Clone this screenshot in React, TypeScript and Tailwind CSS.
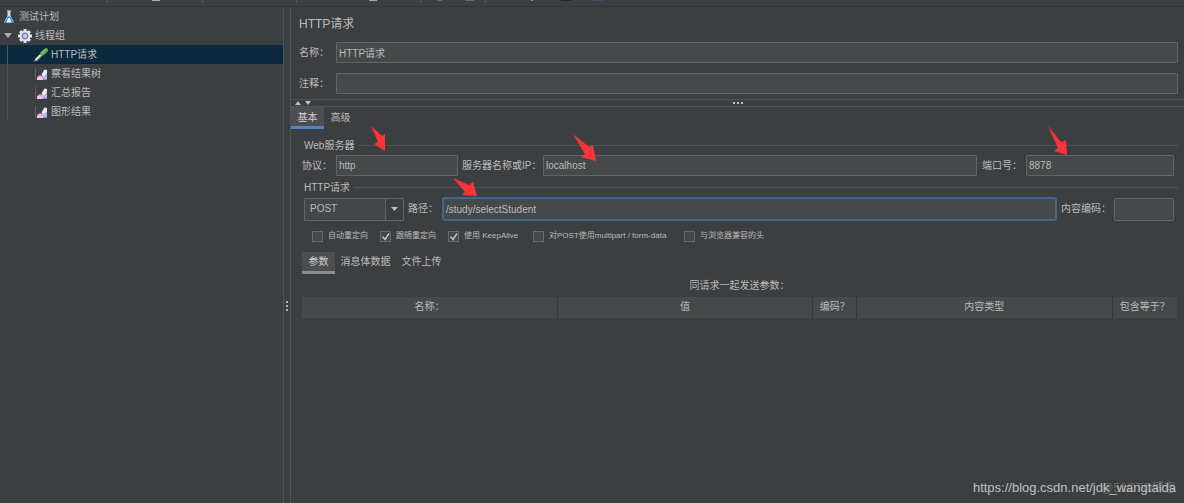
import type { ReactNode } from "react";
import { clsx } from "clsx";

interface TreeItem {
  label: string;
  icon: ReactNode;
  selected?: boolean;
}

function FlaskIcon() {
  return (
    <svg width="12" height="14" viewBox="0 0 12 14">
      <path d="M4.5 1h3v4.500L11 12.500H1L4.500 5.500z" fill="#c4dcee" />
      <path d="M4.6 6.500h2.800L10.600 13H1.400z" fill="#2f86d6" />
      <path d="M5 8h2l1.500 4.500h-5z" fill="#eaf5fd" />
      <path d="M4 .8h4" stroke="#9fc3dd" />
    </svg>
  );
}

function GearIcon() {
  return (
    <svg width="14" height="14" viewBox="0 0 14 14">
      <g stroke="#dfe4ea" strokeWidth="3">
        <path d="M7 0v14M0 7h14M2.1 2.1l9.8 9.8M11.9 2.1l-9.8 9.8" />
      </g>
      <circle cx="7" cy="7" r="5.400" fill="#e4e8ee" />
      <circle cx="7" cy="7" r="3.400" fill="#7587a6" />
      <circle cx="7" cy="7" r="2" fill="#c3d2e6" />
    </svg>
  );
}

function PipetteIcon() {
  return (
    <svg width="14" height="14" viewBox="0 0 14 14">
      <path d="M.5 13.500L3 10" stroke="#b9bcbe" strokeWidth="1.200" />
      <path d="M2 12L8 6" stroke="#e2e4e4" strokeWidth="2.600" />
      <path d="M3 12L9 6" stroke="#8d9296" strokeWidth="1" />
      <path d="M8 5.800l4-3.600" stroke="#5fae4c" strokeWidth="4" strokeLinecap="round" />
      <path d="M8 4.500l3.500-3" stroke="#9bd986" strokeWidth="1" />
    </svg>
  );
}

function ChartIcon() {
  return (
    <svg width="13" height="12" viewBox="0 0 13 12">
      <path d="M.5 0v12" stroke="#5d6164" />
      <path d="M2 9l3-2 2 1 4.500-6.500v10H2z" fill="#d99fd8" />
      <path d="M6.500 6.500L9.500 1.500l2.500.5v3.500L8.500 9z" fill="#eeeaf8" />
      <path d="M8.500 9L12 5v6.500H9z" fill="#b3b9ea" />
      <path d="M2 10l3-1.800 3 2V12H2z" fill="#f3c4ea" />
    </svg>
  );
}

// pointer arrows drawn over the form
function Arrow({ className, points }: { className: string; points: string }) {
  return (
    <svg className={clsx("pointer-events-none absolute", className)} width="26" height="30" viewBox="0 0 26 30">
      <polygon points={points} fill="#fb3336" />
    </svg>
  );
}

function TextField({ label, value, labelClass, className }: { label: string; value: string; labelClass: string; className: string }) {
  return (
    <>
      <label htmlFor={label} className={clsx("shrink-0 whitespace-nowrap", labelClass)}>{label}</label>
      <input id={label} defaultValue={value} className={clsx("min-w-0 bg-[#45494a] outline-none", className)} />
    </>
  );
}

function GroupTitle({ children }: { children: string }) {
  return (
    <div className="flex h-4 items-center gap-1 pl-[13px] pr-[6px]">
      <span className="pt-px">{children}</span>
      <span className="h-px flex-1 bg-[#505355]" />
    </div>
  );
}

function Option({ label, checked = false }: { label: string; checked?: boolean }) {
  return (
    <label className="flex items-center gap-[5px] whitespace-nowrap text-[8px]">
      <span className="grid">
        <input
          type="checkbox"
          defaultChecked={checked}
          className="peer col-start-1 row-start-1 size-[11px] appearance-none border border-[#666a6c] bg-[#43484a]"
        />
        <svg className="pointer-events-none invisible col-start-1 row-start-1 peer-checked:visible" width="11" height="11" viewBox="0 0 11 11">
          <path d="M2.500 5.500l2.500 3 4-6" fill="none" stroke="#c4c6c7" strokeWidth="1.400" />
        </svg>
      </span>
      {label}
    </label>
  );
}

const samplers: TreeItem[] = [
  { label: "HTTP请求", icon: <PipetteIcon />, selected: true },
  { label: "察看结果树", icon: <ChartIcon /> },
  { label: "汇总报告", icon: <ChartIcon /> },
  { label: "图形结果", icon: <ChartIcon /> },
];

const columns = [
  { label: "名称：", width: "" },
  { label: "值", width: "" },
  { label: "编码？", width: "w-[44px]" },
  { label: "内容类型", width: "" },
  { label: "包含等于？", width: "w-[65px]" },
];

const field = "h-[21px] rounded-[1px] border border-[#616567] px-[2px]";

function Sidebar() {
  return (
    <aside className="w-[284px] shrink-0 border-r border-[#505355]">
      <div className="flex h-[19px] items-center gap-1 pl-[3px] pt-px">
        <FlaskIcon />
        测试计划
      </div>
      <div className="flex h-[19px] items-center gap-[3px] pl-1">
        <svg width="8" height="5" viewBox="0 0 8 5" className="mr-[3px]">
          <path d="M0 0h8L4 5z" fill="#aeb0b1" />
        </svg>
        <GearIcon />
        线程组
      </div>
      <ul>
        {samplers.map((item) => (
          <li key={item.label} className={clsx("flex h-[19px] pl-[7px]", item.selected && "bg-[#0d293e]")}>
            <div className="flex items-center gap-[3px] border-l border-[#505355] pl-[26px]">
              <span className="flex w-[14px] justify-end">{item.icon}</span>
              {item.label}
            </div>
          </li>
        ))}
      </ul>
    </aside>
  );
}

function ParameterTable() {
  return (
    <table className="w-full table-fixed border-collapse">
      <caption className="h-[22px] pt-[3px] text-center leading-4">同请求一起发送参数：</caption>
      <thead>
        <tr className="h-[20px] border-b border-[#4b4f51] bg-[#45494b]">
          {columns.map((col) => (
            <th key={col.label} className={clsx("whitespace-nowrap border-r border-[#35383a] p-0 text-center font-normal last:border-r-0", col.width)}>
              {col.label}
            </th>
          ))}
        </tr>
      </thead>
    </table>
  );
}

export default function App() {
  return (
    <div className="relative flex min-h-screen flex-col bg-[#3c3f41] font-['Liberation_Sans','Noto_Sans_CJK_SC',sans-serif] text-[10px] leading-4 text-[#bbbbbb]">
      <header className="flex h-[7px] shrink-0 items-start border-b border-[#323537] pl-[107px]">
        <span className="h-[3px] w-px bg-[#55595b]" />
        <span className="ml-[44px] h-px w-[8px] bg-[#a9acae]" />
        <span className="ml-[42px] h-[3px] w-px bg-[#55595b]" />
        <span className="ml-[93px] h-[3px] w-px bg-[#55595b]" />
        <span className="ml-[72px] h-px w-[8px] bg-[#a9acae]" />
        <span className="ml-[43px] h-[3px] w-px bg-[#55595b]" />
        <span className="ml-[16px] h-px w-[5px] bg-[#66696b]" />
        <span className="ml-[23px] h-px w-[9px] bg-[#66696b]" />
        <span className="ml-[11px] h-[3px] w-px bg-[#55595b]" />
        <span className="ml-[45px] h-px w-[2px] bg-[#8a8d8f]" />
        <span className="ml-[28px] h-px w-[10px] bg-[#232628]" />
        <span className="ml-[22px] h-px w-[9px] bg-[#484e70]" />
      </header>

      <div className="flex flex-1">
        <Sidebar />
        {/* splitter handle */}
        <div className="flex w-[7px] shrink-0 flex-col items-center justify-center gap-[2px] border-r border-[#505355] pt-[101px]">
          <i className="size-[2px] bg-[#b8babb]" />
          <i className="size-[2px] bg-[#b8babb]" />
          <i className="size-[2px] bg-[#b8babb]" />
        </div>

        <main className="min-w-0 flex-1">
          <h1 className="pl-2 pt-2 text-[12px] leading-[18px]">HTTP请求</h1>
          <div className="flex items-center pl-2 pr-[6px] pt-[9px]">
            <TextField label="名称：" value="HTTP请求" labelClass="w-[37px]" className={clsx(field, "flex-1")} />
          </div>
          <div className="flex items-center pl-2 pr-[6px] pt-[10px]">
            <TextField label="注释：" value="" labelClass="w-[37px]" className={clsx(field, "flex-1")} />
          </div>

          <div className="mt-[5px] flex h-[8px] items-center border-y border-[#505355] pl-1 pr-5">
            <svg width="16" height="4" viewBox="0 0 16 4" fill="#c0c2c3">
              <path d="M0 4h6L3 0zM10 0h6l-3 4z" />
            </svg>
            <div className="flex flex-1 justify-center gap-[2px]">
              <i className="size-[2px] bg-[#c0c2c3]" />
              <i className="size-[2px] bg-[#c0c2c3]" />
              <i className="size-[2px] bg-[#c0c2c3]" />
            </div>
          </div>

          <nav className="flex h-[23px] border-b border-[#383b3d]">
            <button className="w-[33px] border-b-[3px] border-[#4a88c7] bg-[#4b4f51] pt-[3px] text-[#d0d0d0]">基本</button>
            <button className="w-[33px]">高级</button>
          </nav>

          <section className="pt-[7px]">
            <GroupTitle>Web服务器</GroupTitle>
            <div className="flex items-center pl-[11px] pr-[10px] pt-[2px]">
              <TextField label="协议：" value="http" labelClass="w-[34px]" className={clsx(field, "w-[122px]")} />
              <TextField label="服务器名称或IP：" value="localhost" labelClass="w-[85px] pl-1" className={clsx(field, "flex-1")} />
              <TextField label="端口号：" value="8878" labelClass="w-[49px] pl-[5px]" className={clsx(field, "w-[148px]")} />
            </div>
          </section>

          <section className="pt-[3px]">
            <GroupTitle>HTTP请求</GroupTitle>
            <div className="flex items-center pl-[13px] pr-[10px] pt-[2px]">
              <div className="grid w-[100px] shrink-0 items-center">
                <select
                  aria-label="HTTP方法"
                  className="col-start-1 row-start-1 h-[23px] appearance-none rounded-[1px] border border-[#616567] bg-[#43474a] px-[5px] outline-none"
                >
                  <option>POST</option>
                </select>
                <span className="pointer-events-none col-start-1 row-start-1 mr-px flex h-[21px] w-[18px] items-center justify-center justify-self-end border-l border-[#616567] bg-[#3c3f41]">
                  <svg width="7" height="4" viewBox="0 0 7 4">
                    <path d="M0 0h7L3.500 4z" fill="#c0c2c3" />
                  </svg>
                </span>
              </div>
              <TextField
                label="路径："
                value="/study/selectStudent"
                labelClass="w-[38px] pl-1"
                className="h-[24px] flex-1 rounded-[3px] border-2 border-[#40688f] px-[2px]"
              />
              <TextField
                label="内容编码："
                value=""
                labelClass="w-[57px] pl-1"
                className="h-[23px] w-[60px] rounded-[1px] border border-[#616567] px-[2px]"
              />
            </div>
          </section>

          <div className="grid grid-cols-[68px_68px_85px_151px_auto] pl-[21px] pt-[7px]">
            <Option label="自动重定向" />
            <Option label="跟随重定向" checked />
            <Option label="使用 KeepAlive" checked />
            <Option label="对POST使用multipart / form-data" />
            <Option label="与浏览器兼容的头" />
          </div>

          <div className="pl-[11px] pr-[7px] pt-2">
            <nav className="flex h-[23px] border-b border-[#383b3d]">
              <button className="w-[33px] border-b-[3px] border-[#8a8d8f] bg-[#4b4f51] pt-px text-[#d0d0d0]">参数</button>
              <button className="w-[61px] whitespace-nowrap pb-[2px]">消息体数据</button>
              <button className="w-[51px] whitespace-nowrap pb-[2px]">文件上传</button>
            </nav>
            <ParameterTable />
          </div>
        </main>
      </div>

      <Arrow className="left-[370px] top-[125px]" points="1,1 12,11 15,9 15,26 4,19 8,17" />
      <Arrow className="left-[572px] top-[133px]" points="1,1 17,14 21,12 24,28 9,24 13,21" />
      <Arrow className="left-[1047px] top-[125px]" points="1,1 14,17 19,15 20,30 7,26 11,23" />
      <Arrow className="left-[452px] top-[177px]" points="1,1 17,8 21,5 25,19 10,18 13,15" />

      <div className="absolute bottom-[7px] right-2 text-[12px] text-[#65686a]">@51CTO博客</div>
      <a href="https://blog.csdn.net/jdk_wangtaida" className="absolute bottom-[7px] right-2 text-[13px] text-[#c0c1c2]">
        https://blog.csdn.net/jdk_wangtaida
      </a>
    </div>
  );
}
